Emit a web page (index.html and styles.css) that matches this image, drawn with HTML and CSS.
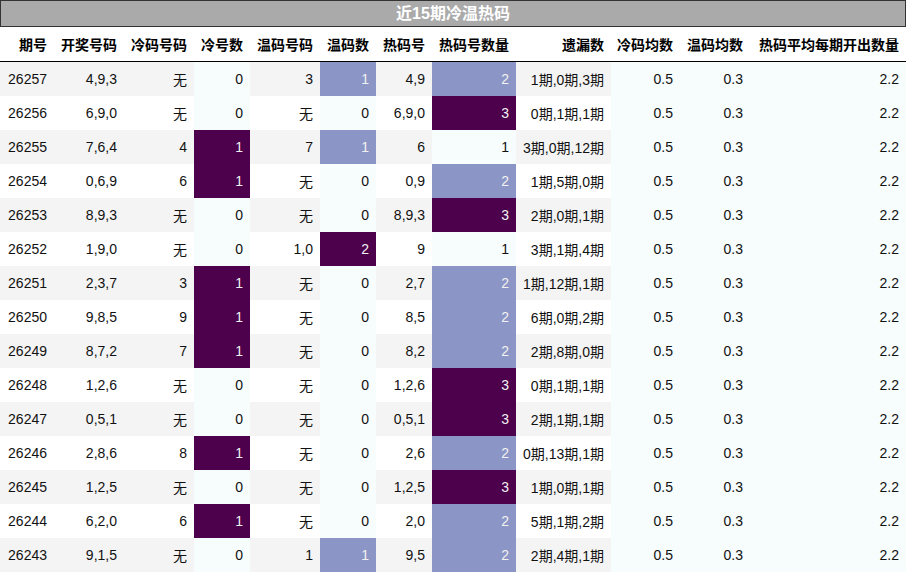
FILE: index.html
```html
<!DOCTYPE html>
<html lang="zh">
<head>
<meta charset="utf-8">
<link rel="stylesheet" href="styles.css">
</head>
<body>
<div class="title">近15期冷温热码</div>
<table class="grid">
<colgroup>
<col class="w54"><col class="w70"><col class="w70"><col class="w56"><col class="w70"><col class="w56"><col class="w56"><col class="w84"><col class="w95"><col class="w69"><col class="w70"><col class="w156">
</colgroup>
<thead>
<tr><th>期号</th><th>开奖号码</th><th>冷码号码</th><th>冷号数</th><th>温码号码</th><th>温码数</th><th>热码号</th><th>热码号数量</th><th>遗漏数</th><th>冷码均数</th><th>温码均数</th><th>热码平均每期开出数量</th></tr>
</thead>
<tbody>
<tr><td>26257</td><td>4,9,3</td><td>无</td><td class="c0">0</td><td>3</td><td class="c1">1</td><td>4,9</td><td class="c1">2</td><td>1期,0期,3期</td><td class="c0">0.5</td><td class="c0">0.3</td><td class="c0">2.2</td></tr>
<tr><td>26256</td><td>6,9,0</td><td>无</td><td class="c0">0</td><td>无</td><td class="c0">0</td><td>6,9,0</td><td class="c2">3</td><td>0期,1期,1期</td><td class="c0">0.5</td><td class="c0">0.3</td><td class="c0">2.2</td></tr>
<tr><td>26255</td><td>7,6,4</td><td>4</td><td class="c2">1</td><td>7</td><td class="c1">1</td><td>6</td><td class="c0">1</td><td>3期,0期,12期</td><td class="c0">0.5</td><td class="c0">0.3</td><td class="c0">2.2</td></tr>
<tr><td>26254</td><td>0,6,9</td><td>6</td><td class="c2">1</td><td>无</td><td class="c0">0</td><td>0,9</td><td class="c1">2</td><td>1期,5期,0期</td><td class="c0">0.5</td><td class="c0">0.3</td><td class="c0">2.2</td></tr>
<tr><td>26253</td><td>8,9,3</td><td>无</td><td class="c0">0</td><td>无</td><td class="c0">0</td><td>8,9,3</td><td class="c2">3</td><td>2期,0期,1期</td><td class="c0">0.5</td><td class="c0">0.3</td><td class="c0">2.2</td></tr>
<tr><td>26252</td><td>1,9,0</td><td>无</td><td class="c0">0</td><td>1,0</td><td class="c2">2</td><td>9</td><td class="c0">1</td><td>3期,1期,4期</td><td class="c0">0.5</td><td class="c0">0.3</td><td class="c0">2.2</td></tr>
<tr><td>26251</td><td>2,3,7</td><td>3</td><td class="c2">1</td><td>无</td><td class="c0">0</td><td>2,7</td><td class="c1">2</td><td>1期,12期,1期</td><td class="c0">0.5</td><td class="c0">0.3</td><td class="c0">2.2</td></tr>
<tr><td>26250</td><td>9,8,5</td><td>9</td><td class="c2">1</td><td>无</td><td class="c0">0</td><td>8,5</td><td class="c1">2</td><td>6期,0期,2期</td><td class="c0">0.5</td><td class="c0">0.3</td><td class="c0">2.2</td></tr>
<tr><td>26249</td><td>8,7,2</td><td>7</td><td class="c2">1</td><td>无</td><td class="c0">0</td><td>8,2</td><td class="c1">2</td><td>2期,8期,0期</td><td class="c0">0.5</td><td class="c0">0.3</td><td class="c0">2.2</td></tr>
<tr><td>26248</td><td>1,2,6</td><td>无</td><td class="c0">0</td><td>无</td><td class="c0">0</td><td>1,2,6</td><td class="c2">3</td><td>0期,1期,1期</td><td class="c0">0.5</td><td class="c0">0.3</td><td class="c0">2.2</td></tr>
<tr><td>26247</td><td>0,5,1</td><td>无</td><td class="c0">0</td><td>无</td><td class="c0">0</td><td>0,5,1</td><td class="c2">3</td><td>2期,1期,1期</td><td class="c0">0.5</td><td class="c0">0.3</td><td class="c0">2.2</td></tr>
<tr><td>26246</td><td>2,8,6</td><td>8</td><td class="c2">1</td><td>无</td><td class="c0">0</td><td>2,6</td><td class="c1">2</td><td>0期,13期,1期</td><td class="c0">0.5</td><td class="c0">0.3</td><td class="c0">2.2</td></tr>
<tr><td>26245</td><td>1,2,5</td><td>无</td><td class="c0">0</td><td>无</td><td class="c0">0</td><td>1,2,5</td><td class="c2">3</td><td>1期,0期,1期</td><td class="c0">0.5</td><td class="c0">0.3</td><td class="c0">2.2</td></tr>
<tr><td>26244</td><td>6,2,0</td><td>6</td><td class="c2">1</td><td>无</td><td class="c0">0</td><td>2,0</td><td class="c1">2</td><td>5期,1期,2期</td><td class="c0">0.5</td><td class="c0">0.3</td><td class="c0">2.2</td></tr>
<tr><td>26243</td><td>9,1,5</td><td>无</td><td class="c0">0</td><td>1</td><td class="c1">1</td><td>9,5</td><td class="c1">2</td><td>2期,4期,1期</td><td class="c0">0.5</td><td class="c0">0.3</td><td class="c0">2.2</td></tr>
</tbody>
</table>
</body>
</html>
```
FILE: styles.css
```css
html, body {
  margin: 0;
  padding: 0;
  background: #ffffff;
}
body {
  width: 906px;
  font-family: "Liberation Sans", "Noto Sans CJK SC", sans-serif;
  font-size: 14px;
  color: #111111;
}
.title {
  box-sizing: border-box;
  height: 27px;
  line-height: 25px;
  background: #aaaaaa;
  border: 1px solid #333333;
  color: #ffffff;
  font-weight: bold;
  font-size: 16px;
  text-align: center;
}
.grid {
  border-collapse: collapse;
  table-layout: fixed;
  width: 906px;
}
.w54 { width: 54px; }
.w56 { width: 56px; }
.w69 { width: 69px; }
.w70 { width: 70px; }
.w84 { width: 84px; }
.w95 { width: 95px; }
.w156 { width: 156px; }
.grid th {
  height: 34px;
  padding: 0 7px 0 0;
  text-align: right;
  font-weight: bold;
  font-size: 14px;
  color: #000000;
  border-bottom: 1px solid #000000;
  white-space: nowrap;
}
.grid td {
  height: 34px;
  padding: 0 7px 0 0;
  text-align: right;
  vertical-align: middle;
  white-space: nowrap;
}
.grid tbody tr:nth-child(odd) td { background: #f4f4f4; }
.grid tbody tr:nth-child(even) td { background: #ffffff; }
.grid tbody tr td.c0 { background: #f7fcfd; color: #111111; }
.grid tbody tr td.c1 { background: #8c96c6; color: #f1f1f1; }
.grid tbody tr td.c2 { background: #4d004b; color: #f1f1f1; }
```
